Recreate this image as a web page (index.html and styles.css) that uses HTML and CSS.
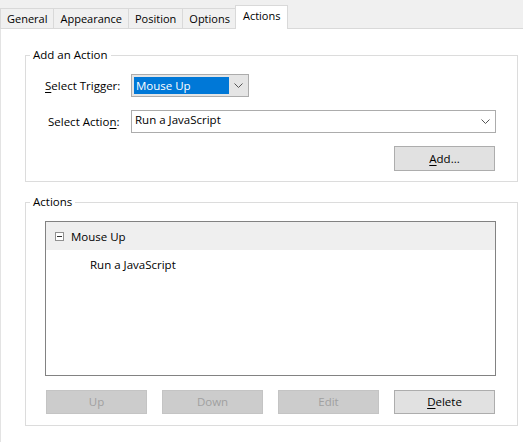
FILE: index.html
```html
<!DOCTYPE html>
<html lang="en">
<head>
    <meta charset="UTF-8">
    <meta name="viewport" content="width=device-width, initial-scale=1.0">
    <title>Actions</title>
    <link rel="stylesheet" href="styles.css">
</head>
<body>
    <div class="tabs">
        <div class="tab">General</div>
        <div class="tab">Appearance</div>
        <div class="tab">Position</div>
        <div class="tab">Options</div>
        <div class="tab active">Actions</div>
    </div>

    <div class="panel">
        <fieldset class="group group-add">
            <legend>Add an Action</legend>
            <div class="row">
                <label class="label"><u>S</u>elect Trigger:</label>
                <div class="combo combo-trigger">
                    <span class="combo-value selected">Mouse Up</span>
                    <span class="combo-arrow">
                        <svg width="9" height="5" viewBox="0 0 9 5"><path d="M0.5 0.5 L4.5 4.5 L8.5 0.5" fill="none" stroke="#555" stroke-width="1"/></svg>
                    </span>
                </div>
            </div>
            <div class="row">
                <label class="label label-action">Select Actio<u>n</u>:</label>
                <div class="combo combo-action">
                    <span class="combo-value">Run a JavaScript</span>
                    <span class="combo-arrow">
                        <svg width="9" height="5" viewBox="0 0 9 5"><path d="M0.5 0.5 L4.5 4.5 L8.5 0.5" fill="none" stroke="#555" stroke-width="1"/></svg>
                    </span>
                </div>
            </div>
            <div class="row row-end">
                <div class="button button-add"><u>A</u>dd...</div>
            </div>
        </fieldset>

        <fieldset class="group group-list">
            <legend>Actions</legend>
            <div class="listbox">
                <div class="item item-trigger">
                    <span class="toggle"></span>
                    <span>Mouse Up</span>
                </div>
                <div class="item item-action">Run a JavaScript</div>
            </div>
            <div class="buttons">
                <div class="button disabled">Up</div>
                <div class="button disabled">Down</div>
                <div class="button disabled">Edit</div>
                <div class="button"><u>D</u>elete</div>
            </div>
        </fieldset>
    </div>
</body>
</html>
```

FILE: styles.css
```css
body {
    margin: 0;
    width: 523px;
    height: 442px;
    overflow: hidden;
    background: #fff;
    color: #000;
    font-family: "Open Sans", "Noto Sans", sans-serif;
    font-size: 11.5px;
}
u {
    text-decoration: underline;
    text-underline-offset: 2px;
}
.tabs {
    display: flex;
    align-items: flex-end;
    height: 29px;
    box-sizing: border-box;
    background: #f0f0f0;
    border-bottom: 1px solid #d9d9d9;
    font-size: 11px;
}
.tab {
    height: 19px;
    line-height: 19px;
    padding: 0 6px;
    border: 1px solid #d9d9d9;
    border-bottom: none;
    margin-right: -1px;
    background: #f0f0f0;
}
.tab.active {
    position: relative;
    height: 23px;
    line-height: 20px;
    margin: 0 0 -1px -1px;
    padding: 0 7px;
    background: #fff;
}
.panel {
    height: 413px;
    box-sizing: border-box;
    padding-top: 18px;
    border-left: 1px solid #e3e3e3;
}
.group {
    margin: 0 5px 0 24px;
    padding: 11px 21px 10px 4px;
    border: 1px solid #dcdcdc;
}
.group legend {
    padding: 0 3px;
    line-height: 16px;
}
.group-list {
    margin-top: 12px;
    padding-bottom: 11px;
}
.row {
    display: flex;
    align-items: center;
    margin-left: 15px;
}
.row + .row {
    margin-top: 13px;
}
.row-end {
    justify-content: flex-end;
}
.label {
    width: 86px;
    flex-shrink: 0;
    box-sizing: border-box;
}
.label-action {
    padding-left: 3px;
}
.combo {
    display: flex;
    align-items: center;
    height: 23px;
    box-sizing: border-box;
    border: 1px solid #acacac;
    background: #fff;
}
.combo-trigger {
    width: 118px;
    padding: 2px 0 2px 2px;
    background: #e5e5e5;
}
.combo-action {
    flex: 1;
    padding-left: 3px;
}
.combo-value {
    flex: 1;
    height: 100%;
    line-height: 18px;
}
.combo-value.selected {
    background: #0078d7;
    color: #fff;
    padding-left: 2px;
}
.combo-arrow {
    width: 19px;
    display: flex;
    justify-content: center;
    align-items: center;
}
.button {
    width: 101px;
    height: 24px;
    line-height: 22px;
    box-sizing: border-box;
    text-align: center;
    background: #e1e1e1;
    border: 1px solid #adadad;
}
.button-add {
    height: 25px;
    line-height: 23px;
    margin-right: 1px;
}
.button.disabled {
    background: #cccccc;
    border-color: #c4c4c4;
    color: #a0a0a0;
}
.listbox {
    margin-left: 15px;
    height: 155px;
    box-sizing: border-box;
    border: 1px solid #828282;
}
.item {
    height: 28px;
    line-height: 29px;
}
.item-trigger {
    display: flex;
    align-items: center;
    gap: 7px;
    padding-left: 9px;
    background: #efefef;
}
.item-action {
    padding-left: 44px;
}
.toggle {
    position: relative;
    width: 9px;
    height: 9px;
    box-sizing: border-box;
    border: 1px solid #919191;
    background: #fff;
}
.toggle::after {
    content: "";
    position: absolute;
    left: 1px;
    right: 1px;
    top: 3px;
    height: 1px;
    background: #333;
}
.buttons {
    display: flex;
    gap: 15px;
    margin: 14px 0 0 16px;
}
```
